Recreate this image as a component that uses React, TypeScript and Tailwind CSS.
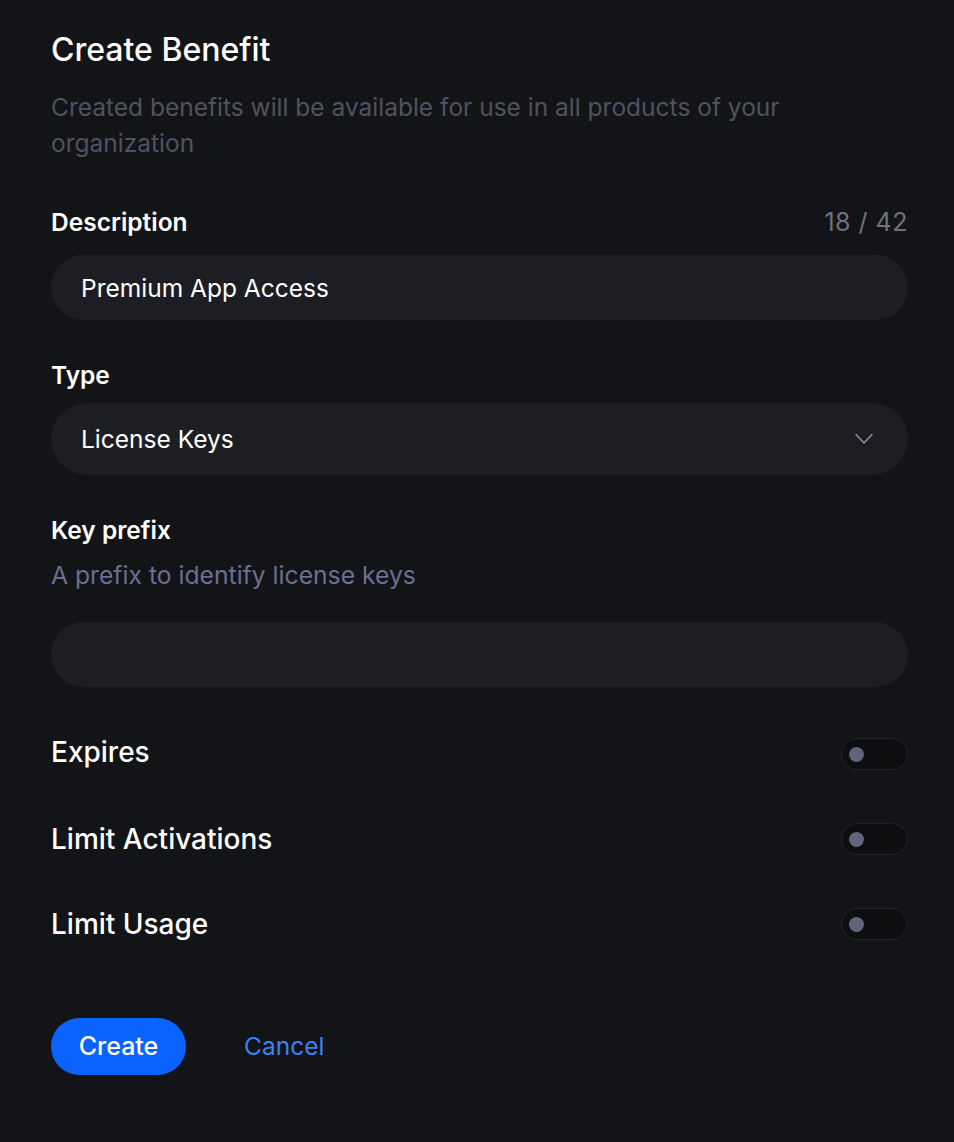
import React, { useState } from 'react';

function Toggle({ on, onClick }: { on: boolean; onClick: () => void }) {
  return (
    <button
      onClick={onClick}
      className={`flex h-[32px] w-[67px] items-center rounded-full border border-[#222329] px-[7px] ${on ? 'justify-end bg-[#0b63ff]' : 'justify-start bg-[#0d0e10]'}`}
    >
      <span className={`block h-[15px] w-[15px] rounded-full ${on ? 'bg-white' : 'bg-[#62647a]'}`} />
    </button>
  );
}

export default function App() {
  const [description, setDescription] = useState('Premium App Access');
  const [prefix, setPrefix] = useState('');
  const [toggles, setToggles] = useState({ expires: false, activations: false, usage: false });

  const flip = (key: keyof typeof toggles) => setToggles({ ...toggles, [key]: !toggles[key] });

  return (
    <main
      className="min-h-screen bg-[#131418] pl-[51px] pr-[46px] pt-[32px] pb-[60px] text-white"
      style={{ fontFamily: 'Inter, "Noto Sans", sans-serif' }}
    >
      <h1 className="text-[32px] leading-[36px] font-medium">Create Benefit</h1>
      <p className="mt-[21px] max-w-[800px] text-[24.5px] leading-[36px] text-[#50525f]">
        Created benefits will be available for use in all products of your organization
      </p>

      <div className="mt-[47px] flex items-center justify-between">
        <label className="text-[24.5px] leading-[28px] font-semibold">Description</label>
        <span className="text-[25px] leading-[28px] tracking-[0.5px] text-[#6f717f]">{description.length} / 42</span>
      </div>
      <input
        value={description}
        maxLength={42}
        onChange={(e) => setDescription(e.target.value)}
        className="mt-[19px] block h-[65px] w-full rounded-full bg-[#1d1e23] px-[30px] text-[24.5px] text-white outline-none"
      />

      <label className="mt-[41px] block text-[24.5px] leading-[28px] font-semibold">Type</label>
      <div className="mt-[14px] flex h-[72px] w-full items-center justify-between rounded-full bg-[#1d1e23] pl-[30px] pr-[35px]">
        <span className="text-[24.5px]">License Keys</span>
        <svg width="18" height="12" viewBox="0 0 18 12" fill="none" stroke="#8b8d98" strokeWidth="1.6" strokeLinecap="round" strokeLinejoin="round">
          <path d="M1 1.5 9 10 17 1.5" />
        </svg>
      </div>

      <label className="mt-[41px] block text-[24.5px] leading-[28px] font-semibold">Key prefix</label>
      <p className="mt-[17px] text-[24.7px] leading-[28px] text-[#6b6f91]">A prefix to identify license keys</p>
      <input
        value={prefix}
        onChange={(e) => setPrefix(e.target.value)}
        className="mt-[33px] block h-[65px] w-full rounded-full bg-[#1d1e23] px-[30px] text-[24.5px] text-white outline-none"
      />

      <div className="mt-[51px] flex flex-col gap-[53px]">
        <div className="flex h-[32px] items-center justify-between">
          <span className="-mt-[5px] text-[28px] font-medium">Expires</span>
          <Toggle on={toggles.expires} onClick={() => flip('expires')} />
        </div>
        <div className="flex h-[32px] items-center justify-between">
          <span className="text-[28px] font-medium">Limit Activations</span>
          <Toggle on={toggles.activations} onClick={() => flip('activations')} />
        </div>
        <div className="flex h-[32px] items-center justify-between">
          <span className="text-[28px] font-medium">Limit Usage</span>
          <Toggle on={toggles.usage} onClick={() => flip('usage')} />
        </div>
      </div>

      <div className="mt-[78px] flex items-center gap-[58px]">
        <button className="h-[57px] w-[135px] rounded-full bg-[#0b63ff] text-[25px] font-medium text-white">Create</button>
        <button className="text-[24.5px] text-[#3b82f6]">Cancel</button>
      </div>
    </main>
  );
}
